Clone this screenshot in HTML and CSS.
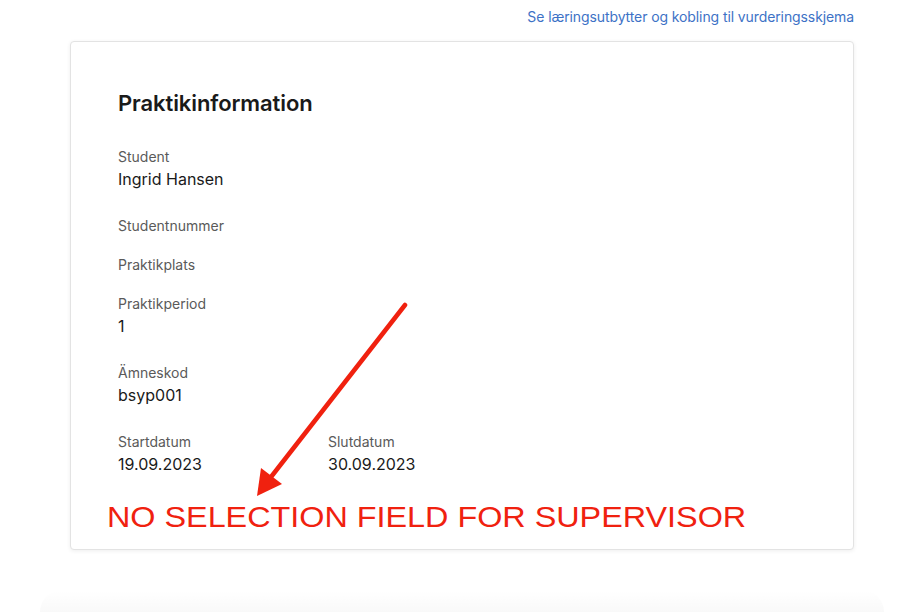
FILE: index.html
```html
<!DOCTYPE html>
<html lang="sv">
<head>
<meta charset="utf-8">
<title>Praktikinformation</title>
<link rel="stylesheet" href="styles.css">
</head>
<body>
<div class="page">
  <div class="topbar">
    <a class="link" href="#">Se læringsutbytter og kobling til vurderingsskjema</a>
  </div>
  <section class="card">
    <h1 class="title">Praktikinformation</h1>
    <div class="field">
      <div class="label">Student</div>
      <div class="value">Ingrid Hansen</div>
    </div>
    <div class="field">
      <div class="label">Studentnummer</div>
    </div>
    <div class="field">
      <div class="label">Praktikplats</div>
    </div>
    <div class="field">
      <div class="label">Praktikperiod</div>
      <div class="value">1</div>
    </div>
    <div class="field">
      <div class="label">Ämneskod</div>
      <div class="value">bsyp001</div>
    </div>
    <div class="row">
      <div class="field col">
        <div class="label">Startdatum</div>
        <div class="value">19.09.2023</div>
      </div>
      <div class="field col">
        <div class="label">Slutdatum</div>
        <div class="value">30.09.2023</div>
      </div>
    </div>
    <svg class="arrow" width="160" height="200" viewBox="0 0 160 200">
      <line x1="152" y1="3" x2="18" y2="175" stroke="#f0210f" stroke-width="4.5" stroke-linecap="round"/>
      <polygon points="4,194 8,166 29,182" fill="#f0210f"/>
    </svg>
    <div class="annotation">NO SELECTION FIELD FOR SUPERVISOR</div>
  </section>
  <div class="next-shade"></div>
</div>
</body>
</html>
```
FILE: styles.css
```css
* { box-sizing: border-box; }
html, body { margin: 0; padding: 0; background: #fff; }
body {
  font-family: Inter, "Noto Sans", sans-serif;
  color: #1c1c1c;
  width: 900px;
  height: 612px;
  overflow: hidden;
}
.page {
  width: 784px;
  margin-left: 70px;
}
.topbar {
  display: flex;
  justify-content: flex-end;
  height: 41px;
  padding-top: 7px;
}
.link {
  color: #3d72c6;
  text-decoration: none;
  font-size: 14px;
  line-height: 20px;
  letter-spacing: -0.1px;
}
.card {
  position: relative;
  height: 509px;
  background: #fff;
  border: 1px solid #e3e3e3;
  border-radius: 4px;
  box-shadow: 0 1px 4px rgba(0,0,0,0.07);
  padding: 47px 47px 0 47px;
}
.title {
  margin: 0 0 30px 0;
  font-size: 22px;
  line-height: 28px;
  font-weight: 600;
  color: #1a1a1a;
  letter-spacing: -0.1px;
}
.field { padding-bottom: 19px; }
.label {
  font-size: 14px;
  line-height: 20px;
  color: #5a5a5a;
}
.value {
  font-size: 16px;
  line-height: 24px;
  padding-bottom: 6px;
  color: #1a1a1a;
}
.row { display: flex; }
.col { width: 210px; }
.arrow {
  position: absolute;
  left: 182px;
  top: 260px;
}
.annotation {
  position: absolute;
  left: 36px;
  top: 458px;
  font-family: "Liberation Sans", Arial, sans-serif;
  font-size: 30px;
  line-height: 34px;
  color: #f0210f;
  white-space: nowrap;
  transform: scaleX(1.078);
  transform-origin: left center;
}
.next-shade {
  margin: 40px -30px 0 -30px;
  height: 22px;
  border-radius: 40px 40px 0 0;
  background: linear-gradient(to bottom, rgba(0,0,0,0), rgba(0,0,0,0.025));
}
```
